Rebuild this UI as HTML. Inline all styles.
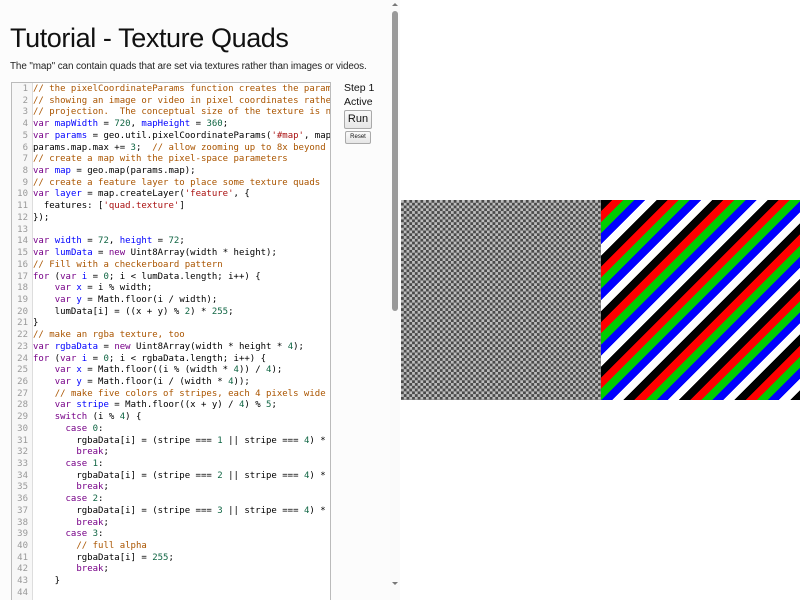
<!DOCTYPE html>
<html><head><meta charset="utf-8"><style>
html,body{margin:0;padding:0;width:800px;height:600px;overflow:hidden;background:#fff;font-family:"Liberation Sans",sans-serif}
#left{position:absolute;left:0;top:0;width:390px;height:600px;background:#fcfcfc;overflow:hidden}
h1{position:absolute;left:10px;top:23px;margin:0;font-weight:normal;font-size:27px;color:#111;letter-spacing:-0.4px}
.desc{position:absolute;left:10px;top:61px;font-size:9.9px;color:#222;white-space:nowrap;letter-spacing:-0.1px}
#code{position:absolute;left:11px;top:82px;width:318px;height:530px;border:1px solid #bbb;background:#fff;overflow:hidden}
#gut{position:absolute;left:0;top:0;width:20px;height:100%;background:#f7f7f7;border-right:1px solid #ddd}
pre{position:absolute;left:0;top:1px;margin:0;font-family:"DejaVu Sans Mono","Liberation Mono",monospace;font-size:9px;line-height:11.72px;color:#000;white-space:pre}
.ln{display:inline-block;width:16px;text-align:right;color:#999;margin-right:5px}
.c{color:#a50}.k{color:#708}.v{color:#00f}.n{color:#164}.s{color:#a11}
#side{position:absolute;left:344px;top:82px;font-size:10.5px;color:#111;white-space:nowrap}
.btn{border:1px solid #aaa;border-radius:2px;background:linear-gradient(#fafafa,#e6e6e6);text-align:center;color:#111}
#sb{position:absolute;left:390px;top:0;width:10px;height:600px;background:#fafafa}
#thumb{position:absolute;left:2px;top:11px;width:6px;height:300px;background:#999;border-radius:3px}
#map{position:absolute;left:401px;top:200px;width:399px;height:200px}
#chk{position:absolute;left:0;top:0;width:200px;height:200px;background:repeating-conic-gradient(#4a4a4a 0 25%,#bdbdbd 0 50%) 0 0/5.56px 5.56px}
#str{position:absolute;left:200px;top:0;width:199px;height:200px;background:repeating-linear-gradient(135deg,#000 0 7.86px,#f00 7.86px 15.72px,#0c0 15.72px 23.58px,#00f 23.58px 31.44px,#fff 31.44px 39.3px)}
</style></head><body>
<div id="left">
<h1>Tutorial - Texture Quads</h1>
<div class="desc">The "map" can contain quads that are set via textures rather than images or videos.</div>
<div id="code"><div id="gut"></div><pre><span class="ln">1</span><span class="c">// the pixelCoordinateParams function creates the parameters</span>
<span class="ln">2</span><span class="c">// showing an image or video in pixel coordinates rather</span>
<span class="ln">3</span><span class="c">// projection.  The conceptual size of the texture is not</span>
<span class="ln">4</span><span class="k">var</span> <span class="v">mapWidth</span> = <span class="n">720</span>, <span class="v">mapHeight</span> = <span class="n">360</span>;
<span class="ln">5</span><span class="k">var</span> <span class="v">params</span> = geo.util.pixelCoordinateParams(<span class="s">'#map'</span>, mapWidth
<span class="ln">6</span>params.map.max += <span class="n">3</span>;  <span class="c">// allow zooming up to 8x beyond</span>
<span class="ln">7</span><span class="c">// create a map with the pixel-space parameters</span>
<span class="ln">8</span><span class="k">var</span> <span class="v">map</span> = geo.map(params.map);
<span class="ln">9</span><span class="c">// create a feature layer to place some texture quads</span>
<span class="ln">10</span><span class="k">var</span> <span class="v">layer</span> = map.createLayer(<span class="s">'feature'</span>, {
<span class="ln">11</span>  features: [<span class="s">'quad.texture'</span>]
<span class="ln">12</span>});
<span class="ln">13</span>
<span class="ln">14</span><span class="k">var</span> <span class="v">width</span> = <span class="n">72</span>, <span class="v">height</span> = <span class="n">72</span>;
<span class="ln">15</span><span class="k">var</span> <span class="v">lumData</span> = <span class="k">new</span> Uint8Array(width * height);
<span class="ln">16</span><span class="c">// Fill with a checkerboard pattern</span>
<span class="ln">17</span><span class="k">for</span> (<span class="k">var</span> <span class="v">i</span> = <span class="n">0</span>; i &lt; lumData.length; i++) {
<span class="ln">18</span>    <span class="k">var</span> <span class="v">x</span> = i % width;
<span class="ln">19</span>    <span class="k">var</span> <span class="v">y</span> = Math.floor(i / width);
<span class="ln">20</span>    lumData[i] = ((x + y) % <span class="n">2</span>) * <span class="n">255</span>;
<span class="ln">21</span>}
<span class="ln">22</span><span class="c">// make an rgba texture, too</span>
<span class="ln">23</span><span class="k">var</span> <span class="v">rgbaData</span> = <span class="k">new</span> Uint8Array(width * height * <span class="n">4</span>);
<span class="ln">24</span><span class="k">for</span> (<span class="k">var</span> <span class="v">i</span> = <span class="n">0</span>; i &lt; rgbaData.length; i++) {
<span class="ln">25</span>    <span class="k">var</span> <span class="v">x</span> = Math.floor((i % (width * <span class="n">4</span>)) / <span class="n">4</span>);
<span class="ln">26</span>    <span class="k">var</span> <span class="v">y</span> = Math.floor(i / (width * <span class="n">4</span>));
<span class="ln">27</span>    <span class="c">// make five colors of stripes, each 4 pixels wide</span>
<span class="ln">28</span>    <span class="k">var</span> <span class="v">stripe</span> = Math.floor((x + y) / <span class="n">4</span>) % <span class="n">5</span>;
<span class="ln">29</span>    <span class="k">switch</span> (i % <span class="n">4</span>) {
<span class="ln">30</span>      <span class="k">case</span> <span class="n">0</span>:
<span class="ln">31</span>        rgbaData[i] = (stripe === <span class="n">1</span> || stripe === <span class="n">4</span>) * <span class="n">255</span>;
<span class="ln">32</span>        <span class="k">break</span>;
<span class="ln">33</span>      <span class="k">case</span> <span class="n">1</span>:
<span class="ln">34</span>        rgbaData[i] = (stripe === <span class="n">2</span> || stripe === <span class="n">4</span>) * <span class="n">255</span>;
<span class="ln">35</span>        <span class="k">break</span>;
<span class="ln">36</span>      <span class="k">case</span> <span class="n">2</span>:
<span class="ln">37</span>        rgbaData[i] = (stripe === <span class="n">3</span> || stripe === <span class="n">4</span>) * <span class="n">255</span>;
<span class="ln">38</span>        <span class="k">break</span>;
<span class="ln">39</span>      <span class="k">case</span> <span class="n">3</span>:
<span class="ln">40</span>        <span class="c">// full alpha</span>
<span class="ln">41</span>        rgbaData[i] = <span class="n">255</span>;
<span class="ln">42</span>        <span class="k">break</span>;
<span class="ln">43</span>    }
<span class="ln">44</span>
<span class="ln">45</span>}</pre></div>
<div id="side">
<div style="position:absolute;left:0;top:0">Step 1</div>
<div style="position:absolute;left:0;top:14px">Active</div>
<div class="btn" style="position:absolute;left:0;top:28px;width:26px;height:17px;line-height:17px;font-size:11px">Run</div>
<div class="btn" style="position:absolute;left:1px;top:49px;width:24px;height:11px;line-height:11px;font-size:6px">Reset</div>
</div>
</div>
<div id="sb"><div style="position:absolute;left:2px;top:3px;width:0;height:0;border-left:3px solid transparent;border-right:3px solid transparent;border-bottom:3px solid #777"></div><div id="thumb"></div><div style="position:absolute;left:2px;top:582px;width:0;height:0;border-left:3px solid transparent;border-right:3px solid transparent;border-top:3px solid #777"></div></div>
<div id="map"><div id="chk"></div><div id="str"></div></div>
</body></html>
